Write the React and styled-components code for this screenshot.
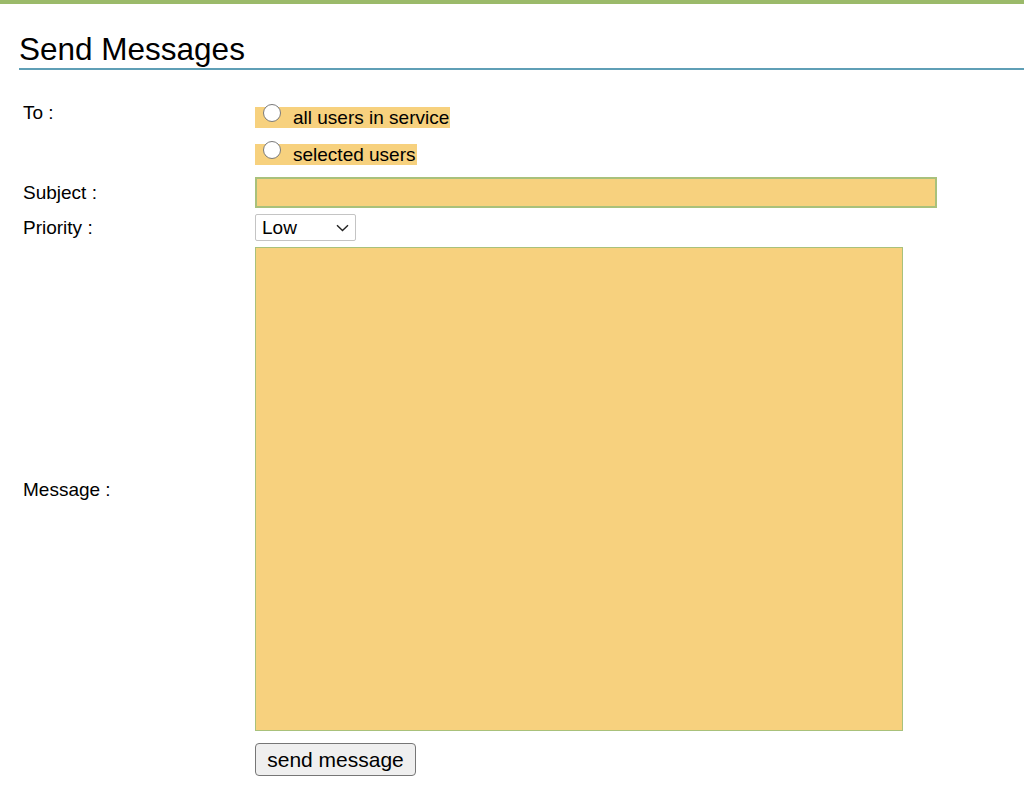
import React from "react";
import styled, { createGlobalStyle } from "styled-components";

const Global = createGlobalStyle`
  html, body { margin: 0; padding: 0; background: #fff; }
  body { font-family: "Liberation Sans", Arial, sans-serif; color: #000; }
`;

const TopBar = styled.div`
  height: 4px;
  background: #9bba6a;
`;

const Page = styled.div`
  padding-left: 19px;
`;

const Heading = styled.h1`
  margin: 27px 0 0;
  font-size: 31.5px;
  font-weight: normal;
  line-height: 36px;
  padding-bottom: 1px;
  border-bottom: 2px solid #5f9fb6;
`;

const Form = styled.form`
  display: grid;
  grid-template-columns: 236px auto;
  justify-content: start;
  row-gap: 6px;
  margin-top: 31px;
  font-size: 19px;
`;

const Label = styled.div`
  padding-left: 4px;
  line-height: 21px;
  align-self: ${(p) => (p.$top ? "start" : "center")};
  margin-top: ${(p) => (p.$top ? "1px" : "0")};
`;

const Options = styled.div`
  display: flex;
  flex-direction: column;
  align-items: flex-start;
  gap: 16px;
  padding-top: 6px;
  padding-bottom: 6px;
`;

const Option = styled.label`
  display: inline-flex;
  align-items: center;
  height: 21px;
  background: #f7d17e;
  line-height: 21px;
  padding-right: 1px;
`;

const Radio = styled.input.attrs({ type: "radio" })`
  appearance: none;
  width: 18px;
  height: 18px;
  margin: 0 12px 0 8px;
  border: 1.3px solid #7a7a7a;
  border-radius: 50%;
  background: #fff;
  box-sizing: border-box;
  position: relative;
  top: -5px;
`;

const TextInput = styled.input`
  box-sizing: border-box;
  width: 682px;
  height: 31px;
  margin: 0;
  border: 2px solid #a9c17b;
  background: #f7d17e;
  font: inherit;
  outline: none;
`;

const SelectWrap = styled.div`
  position: relative;
  width: 101px;
  height: 27px;
`;

const Select = styled.select`
  appearance: none;
  box-sizing: border-box;
  width: 101px;
  height: 27px;
  margin: 0;
  padding: 0 0 0 6px;
  border: 1px solid #c4c4c4;
  border-radius: 2px;
  background: #fff;
  font-family: "Liberation Sans", Arial, sans-serif;
  font-size: 19px;
  color: #000;
`;

const Chevron = styled.svg`
  position: absolute;
  right: 7px;
  top: 10px;
  pointer-events: none;
`;

const TextArea = styled.textarea`
  box-sizing: border-box;
  width: 648px;
  height: 484px;
  margin: 0;
  border: 1.5px solid #a9c17b;
  background: #f7d17e;
  resize: none;
  outline: none;
  display: block;
`;

const Button = styled.button`
  grid-column: 2;
  justify-self: start;
  margin-top: 6px;
  box-sizing: border-box;
  width: 161px;
  height: 33px;
  padding: 0;
  border: 1px solid #767676;
  border-radius: 4px;
  background: #efefef;
  font-family: "Liberation Sans", Arial, sans-serif;
  font-size: 21px;
  color: #000;
`;

export default function App() {
  return (
    <>
      <Global />
      <TopBar />
      <Page>
        <Heading>Send Messages</Heading>
        <Form onSubmit={(e) => e.preventDefault()}>
          <Label $top>To :</Label>
          <Options>
            <Option>
              <Radio name="to" />
              all users in service
            </Option>
            <Option>
              <Radio name="to" />
              selected users
            </Option>
          </Options>

          <Label>Subject :</Label>
          <TextInput type="text" />

          <Label>Priority :</Label>
          <SelectWrap>
            <Select defaultValue="Low">
              <option>Low</option>
              <option>Normal</option>
              <option>High</option>
            </Select>
            <Chevron width="13" height="8" viewBox="0 0 13 8">
              <path d="M1 1.2 L6.5 6.5 L12 1.2" fill="none" stroke="#222" strokeWidth="1.4" />
            </Chevron>
          </SelectWrap>

          <Label>Message :</Label>
          <TextArea />

          <Button type="submit">send message</Button>
        </Form>
      </Page>
    </>
  );
}
